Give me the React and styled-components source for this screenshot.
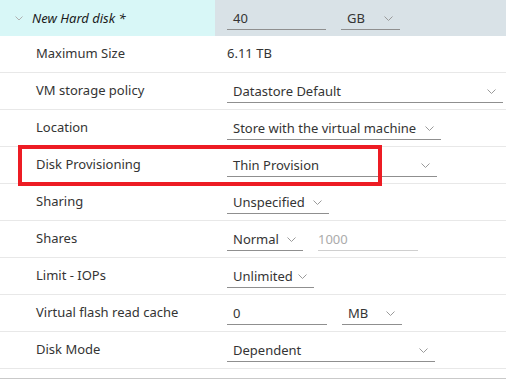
import React from 'react';
import styled, { createGlobalStyle } from 'styled-components';

const Global = createGlobalStyle`
  html, body {
    margin: 0;
    padding: 0;
    background: #fff;
  }
  body {
    font-family: "Noto Sans", "Open Sans", sans-serif;
    font-size: 13px;
    color: #343434;
  }
`;

const Panel = styled.div`
  width: 506px;
  border-bottom: 1px solid #c9c9c9;
  padding-bottom: 9px;
`;

const HeaderRow = styled.div`
  display: grid;
  grid-template-columns: 215px 1fr;
  height: 36px;
`;

const HeaderLabel = styled.div`
  background: #d8f7f7;
  display: flex;
  align-items: center;
  padding-left: 15px;
  gap: 9px;
  font-style: italic;
  color: #1b1b1b;
  font-size: 13px;
`;

const HeaderValue = styled.div`
  background: #d9e2e7;
  display: flex;
  align-items: flex-start;
  padding: 8px 0 0 12px;
  gap: 15px;
`;

const Row = styled.div`
  position: relative;
  display: grid;
  grid-template-columns: 227px 1fr;
  height: 36px;
  border-bottom: 1px solid #e8e8e8;
`;

const Label = styled.div`
  padding-left: ${p => (p.$plain ? 0 : 36)}px;
  line-height: 35px;
`;

const Value = styled.div`
  display: flex;
  align-items: flex-start;
  padding-top: 8px;
  gap: 15px;
`;

const Field = styled.div`
  position: relative;
  box-sizing: border-box;
  width: ${p => p.$w}px;
  height: 22px;
  line-height: 20px;
  padding-left: ${p => (p.$pad ? 6 : 0)}px;
  border-bottom: 1px solid ${p => (p.$muted ? '#cfcfcf' : '#8f8f8f')};
  color: ${p => (p.$muted ? '#ababab' : 'inherit')};
  white-space: nowrap;
`;

const Chevron = styled.svg`
  position: absolute;
  right: 7px;
  top: 8px;
`;

const Highlight = styled.div`
  position: absolute;
  left: 18px;
  top: -2px;
  width: 364px;
  height: 41px;
  box-sizing: border-box;
  border: 4px solid #ed1c24;
  pointer-events: none;
`;

const Down = ({ color = '#9a9a9a' }) => (
  <svg width="8" height="5" viewBox="0 0 8 5">
    <path d="M0.5 0.5 L4 4 L7.5 0.5" fill="none" stroke={color} strokeWidth="1" />
  </svg>
);

const Select = ({ w, children }) => (
  <Field $w={w} $pad>
    {children}
    <Chevron width="9" height="5" viewBox="0 0 9 5">
      <path d="M0.5 0.5 L4.5 4.5 L8.5 0.5" fill="none" stroke="#9a9a9a" strokeWidth="1" />
    </Chevron>
  </Field>
);

const rows = [
  { label: 'Maximum Size', text: '6.11 TB' },
  { label: 'VM storage policy', fields: [{ sel: true, w: 276, v: 'Datastore Default' }] },
  { label: 'Location', fields: [{ sel: true, w: 214, v: 'Store with the virtual machine' }] },
  { label: 'Disk Provisioning', fields: [{ sel: true, w: 210, v: 'Thin Provision' }], mark: true },
  { label: 'Sharing', fields: [{ sel: true, w: 102, v: 'Unspecified' }] },
  { label: 'Shares', fields: [{ sel: true, w: 76, v: 'Normal' }, { w: 100, v: '1000', muted: true }] },
  { label: 'Limit - IOPs', fields: [{ sel: true, w: 87, v: 'Unlimited' }] },
  { label: 'Virtual flash read cache', fields: [{ w: 100, v: '0', pad: true }, { sel: true, w: 60, v: 'MB' }] },
  { label: 'Disk Mode', fields: [{ sel: true, w: 208, v: 'Dependent' }] },
];

export default function App() {
  return (
    <>
      <Global />
      <Panel>
        <HeaderRow>
          <HeaderLabel>
            <Down color="#b0b0b0" />
            <span>New Hard disk *</span>
          </HeaderLabel>
          <HeaderValue>
            <Field $w={99} $pad>40</Field>
            <Select w={59}>GB</Select>
          </HeaderValue>
        </HeaderRow>
        {rows.map(r => (
          <Row key={r.label}>
            <Label>{r.label}</Label>
            {r.text ? (
              <Label $plain>{r.text}</Label>
            ) : (
              <Value>
                {r.fields.map((f, i) =>
                  f.sel ? (
                    <Select key={i} w={f.w}>{f.v}</Select>
                  ) : (
                    <Field key={i} $w={f.w} $pad={f.pad} $muted={f.muted}>{f.v}</Field>
                  )
                )}
              </Value>
            )}
            {r.mark && <Highlight />}
          </Row>
        ))}
      </Panel>
    </>
  );
}
